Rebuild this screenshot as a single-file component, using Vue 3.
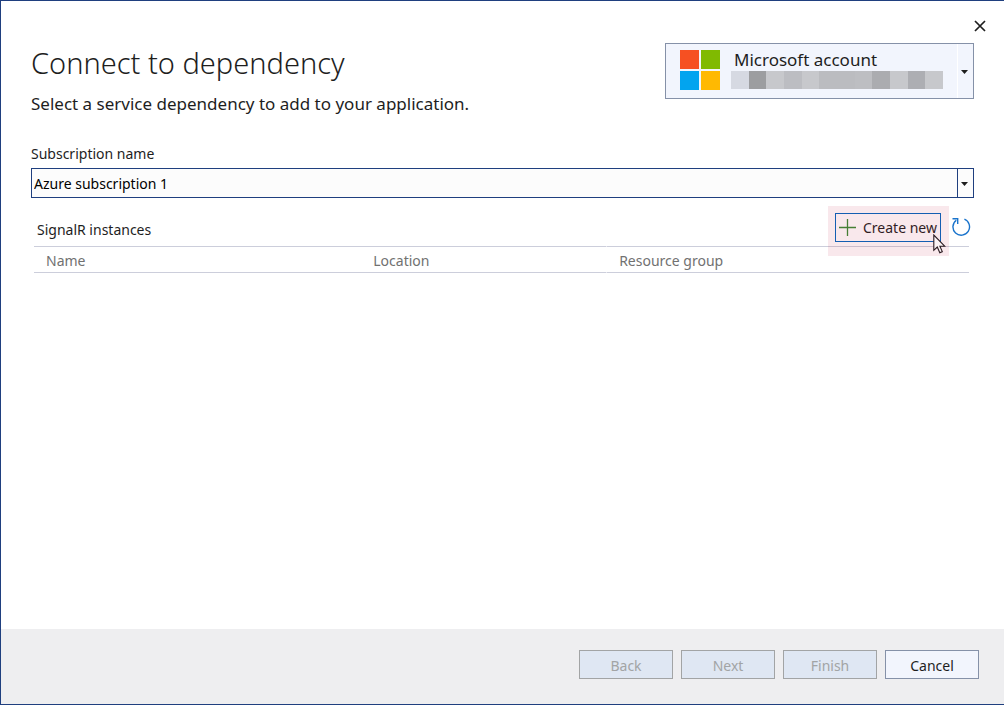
<script setup>
import { ref } from 'vue'

const subscription = ref('Azure subscription 1')
const maskShades = [
  '#d6d9e2', '#9c9da0', '#c7c8cc', '#bcbdc2', '#c7c8cc', '#bbbcc0',
  '#bbbcc0', '#bdbec2', '#abacb0', '#c7c8cc', '#adaeb3', '#c7c8cc',
]
const columns = ['Name', 'Location', 'Resource group']
const steps = ['Back', 'Next', 'Finish']
</script>

<template>
  <div class="dialog">
    <div class="titlebar">
      <button class="close" type="button" aria-label="Close">
        <svg width="12" height="12" viewBox="0 0 12 12" aria-hidden="true">
          <path d="M1 1L11 11M11 1L1 11" fill="none" stroke="#1e1e1e" stroke-width="1.7" />
        </svg>
      </button>
    </div>

    <main class="body">
      <header class="header">
        <div>
          <h1>Connect to dependency</h1>
          <p class="intro">Select a service dependency to add to your application.</p>
        </div>
        <button class="account" type="button">
          <svg class="logo" width="40" height="40" viewBox="0 0 40 40" aria-hidden="true">
            <rect width="19" height="19" fill="#f65022" />
            <rect x="21" width="19" height="19" fill="#80ba01" />
            <rect y="21" width="19" height="19" fill="#02a4ef" />
            <rect x="21" y="21" width="19" height="19" fill="#ffb902" />
          </svg>
          <span class="identity">
            <span class="provider">Microsoft account</span>
            <span class="mask">
              <i v-for="(shade, i) in maskShades" :key="i" :style="{ background: shade }"></i>
            </span>
          </span>
          <span class="account-arrow">
            <svg width="7" height="4" viewBox="0 0 7 4" aria-hidden="true"><path d="M0 0H7L3.5 4Z" fill="#1e1e1e" /></svg>
          </span>
        </button>
      </header>

      <label class="field-label" for="subscription">Subscription name</label>
      <div class="combo">
        <select id="subscription" v-model="subscription">
          <option>Azure subscription 1</option>
        </select>
        <span class="combo-arrow">
          <svg width="7" height="4" viewBox="0 0 7 4" aria-hidden="true"><path d="M0 0H7L3.5 4Z" fill="#1e1e1e" /></svg>
        </span>
      </div>

      <section class="instances">
        <div class="toolbar">
          <h2>SignalR instances</h2>
          <div class="create-wrap">
            <button class="create" type="button">
              <svg width="17" height="17" viewBox="0 0 17 17" aria-hidden="true">
                <path d="M8.5 0V17M0 8.5H17" fill="none" stroke="#388a34" stroke-width="1.3" />
              </svg>
              Create new
            </button>
            <span class="highlight"></span>
            <svg class="pointer" width="13" height="20" viewBox="0 0 13 20" aria-hidden="true">
              <path d="M.8 1V16.3L4.3 13L6.8 18.7L9.3 17.6L6.9 12.2H11.7Z" fill="#fbf3f5" stroke="#2a1a20" stroke-width="1.1" />
            </svg>
          </div>
          <button class="refresh" type="button" aria-label="Refresh">
            <svg width="20" height="20" viewBox="0 0 20 20" aria-hidden="true">
              <path d="M13.4 2.2A8.3 8.3 0 1 1 5.3 3.2M1.5 1.7H6.7V7" fill="none" stroke="#1a74cc" stroke-width="1.4" />
            </svg>
          </button>
        </div>
        <table>
          <thead>
            <tr>
              <th v-for="column in columns" :key="column" scope="col">{{ column }}</th>
            </tr>
          </thead>
        </table>
      </section>
    </main>

    <footer class="footer">
      <button v-for="step in steps" :key="step" type="button" disabled>{{ step }}</button>
      <button type="button">Cancel</button>
    </footer>
  </div>
</template>

<style>
body {
  margin: 0;
}
</style>

<style scoped>
.dialog {
  box-sizing: border-box;
  min-height: 100vh;
  display: flex;
  flex-direction: column;
  border: 1px solid #1f3f7f;
  border-right: 0;
  background: #fff;
  color: #1e1e1e;
  font: 14px/20px "Noto Sans", "Open Sans", sans-serif;
}
button,
select {
  font: inherit;
  color: inherit;
  margin: 0;
  padding: 0;
  border-radius: 0;
  box-sizing: border-box;
}
svg {
  display: block;
  flex: none;
}
.titlebar {
  display: flex;
  justify-content: flex-end;
  height: 42px;
  padding-right: 14px;
}
.close {
  display: flex;
  align-items: center;
  justify-content: center;
  width: 20px;
  height: 20px;
  margin-top: 15px;
  border: 0;
  background: none;
}
.body {
  flex: 1;
  padding: 0 30px;
}
.header {
  display: flex;
  justify-content: space-between;
  align-items: flex-start;
}
h1 {
  margin: 0;
  font-size: 29px;
  line-height: 40px;
  font-weight: 300;
}
.intro {
  margin: 9px 0 0;
  font-size: 17px;
  line-height: 24px;
}
.account {
  display: flex;
  align-items: stretch;
  width: 309px;
  height: 56px;
  border: 1px solid #8591a8;
  background: #f2f5fd;
  text-align: left;
}
.logo {
  margin: 6px 11px 0 14px;
}
.identity {
  flex: 1;
  padding-top: 5px;
}
.provider {
  display: block;
  padding-left: 3px;
  font-size: 17px;
  line-height: 22px;
}
.mask {
  display: flex;
  width: 212px;
  height: 18px;
}
.mask i {
  flex: 1;
}
.account-arrow {
  display: flex;
  align-items: center;
  justify-content: center;
  width: 13px;
  padding: 2px 2px 0 0;
  border-left: 1px solid #fff;
}
.field-label {
  display: block;
  margin: 28px 0 4px;
}
.combo {
  position: relative;
}
.combo select {
  display: block;
  width: 100%;
  height: 30px;
  padding: 2px 18px 0 2px;
  border: 1px solid #1f3f7f;
  background: #fcfcfc;
  color: #000;
  appearance: none;
}
.combo-arrow {
  position: absolute;
  top: 0;
  right: 0;
  bottom: 0;
  width: 13px;
  padding: 2px 2px 0 0;
  display: flex;
  align-items: center;
  justify-content: center;
  border: 1px solid #1f3f7f;
  pointer-events: none;
}
.instances {
  padding: 15px 5px 0 3px;
}
.toolbar {
  display: flex;
  align-items: flex-start;
  height: 33px;
}
h2 {
  flex: 1;
  margin: 7px 0 0 3px;
  font: inherit;
}
.create-wrap {
  position: relative;
}
.create {
  display: flex;
  align-items: center;
  gap: 7px;
  width: 106px;
  height: 29px;
  padding-left: 3px;
  border: 1px solid #0066bf;
  background: #fff;
  white-space: nowrap;
}
.highlight {
  position: absolute;
  top: -7px;
  right: -8px;
  bottom: -14px;
  left: -7px;
  background: rgba(200, 30, 70, 0.1);
  pointer-events: none;
}
.pointer {
  position: absolute;
  left: 98px;
  top: 21px;
}
.refresh {
  margin: 4px -2px 0 10px;
  border: 0;
  background: none;
}
table {
  width: 100%;
  table-layout: fixed;
  border-collapse: separate;
  border-spacing: 0;
}
th {
  height: 27px;
  box-sizing: border-box;
  padding: 2px 0 0 12px;
  border: 1px solid #cccedb;
  border-width: 1px 0;
  color: #717171;
  font-weight: 400;
  text-align: left;
}
th:nth-child(1) {
  width: 35%;
}
th:nth-child(2) {
  width: 26.3%;
  border-right: 1px solid #fff;
}
.footer {
  display: flex;
  justify-content: flex-end;
  gap: 8px;
  padding: 21px 25px 25px;
  background: #eeeef0;
}
.footer button {
  width: 94px;
  height: 29px;
  padding-top: 2px;
  border: 1px solid #8591a8;
  background: #f2f5fd;
}
.footer button:disabled {
  border-color: #a2a4a5;
  background: #dfe7f3;
  color: #a2a4a5;
}
</style>
